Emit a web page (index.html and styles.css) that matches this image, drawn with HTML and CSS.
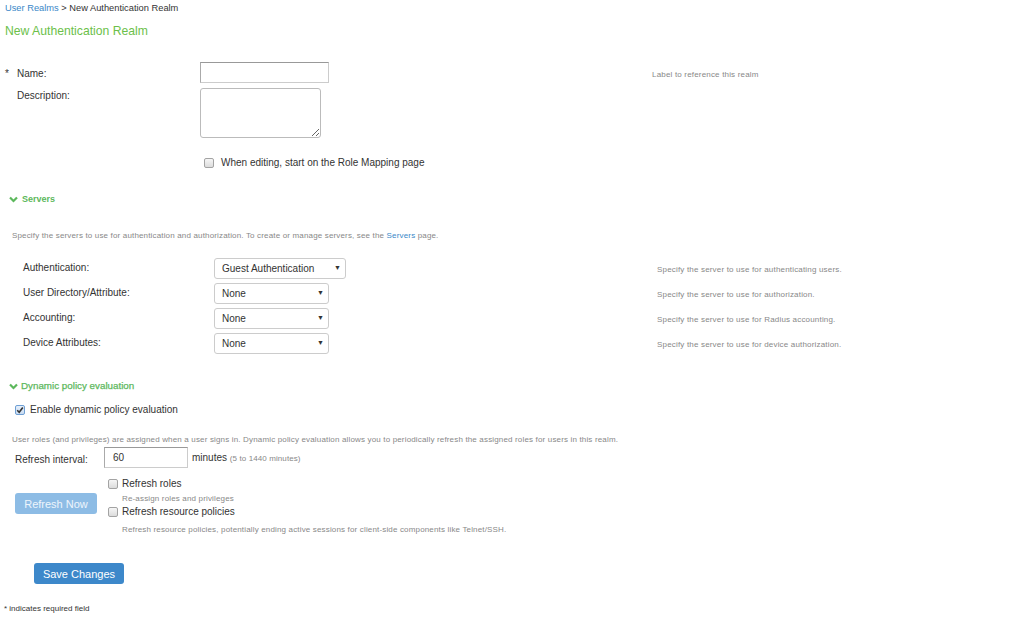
FILE: index.html
```html
<!DOCTYPE html>
<html lang="en">
<head>
	<meta charset="UTF-8">
	<title>New Authentication Realm</title>
	<link rel="stylesheet" href="styles.css">
</head>
<body>

	<div class="crumb"><a href="#">User Realms</a> &gt; New Authentication Realm</div>
	<h1 class="title">New Authentication Realm</h1>

	<div class="realm-grid">
		<div class="lbl mid"><span class="req">*</span>Name:</div>
		<div class="mid"><input type="text" class="txt name-input"></div>
		<div class="help mid">Label to reference this realm</div>

		<div class="lbl top"><span class="req"></span>Description:</div>
		<div><textarea class="desc"></textarea></div>
		<div></div>

		<div></div>
		<label class="check-row start-map"><span class="cb"></span>When editing, start on the Role Mapping page</label>
		<div></div>
	</div>

	<div class="section-head"><span class="chev"><svg width="9" height="7" viewBox="0 0 9 7"><path d="M1 1.5 L4.5 5 L8 1.5" fill="none" stroke="#5cb85c" stroke-width="2.2"/></svg></span>Servers</div>
	<p class="note servers-note">Specify the servers to use for authentication and authorization. To create or manage servers, see the <a href="#">Servers</a> page.</p>

	<div class="server-grid">
		<div class="lbl">Authentication:</div>
		<div><span class="sel wide">Guest Authentication</span></div>
		<div class="help">Specify the server to use for authenticating users.</div>

		<div class="lbl">User Directory/Attribute:</div>
		<div><span class="sel">None</span></div>
		<div class="help">Specify the server to use for authorization.</div>

		<div class="lbl">Accounting:</div>
		<div><span class="sel">None</span></div>
		<div class="help">Specify the server to use for Radius accounting.</div>

		<div class="lbl">Device Attributes:</div>
		<div><span class="sel">None</span></div>
		<div class="help">Specify the server to use for device authorization.</div>
	</div>

	<div class="section-head dyn"><span class="chev"><svg width="9" height="7" viewBox="0 0 9 7"><path d="M1 1.5 L4.5 5 L8 1.5" fill="none" stroke="#5cb85c" stroke-width="2.2"/></svg></span>Dynamic policy evaluation</div>
	<label class="check-row enable"><span class="cb on"><svg width="8" height="8" viewBox="0 0 8 8"><path d="M1.2 4.2 L3.2 6.2 L6.8 1.4" fill="none" stroke="#333" stroke-width="1.6"/></svg></span>Enable dynamic policy evaluation</label>

	<p class="note roles-note">User roles (and privileges) are assigned when a user signs in. Dynamic policy evaluation allows you to periodically refresh the assigned roles for users in this realm.</p>

	<div class="interval-row">
		<span class="lbl interval-lbl">Refresh interval:</span>
		<input type="text" class="txt interval-input" value="60">
		<span class="minutes">minutes <small>(5 to 1440 minutes)</small></span>
	</div>

	<div class="refresh-block">
		<div class="refresh-left"><button class="btn btn-light">Refresh Now</button></div>
		<div class="refresh-right">
			<label class="check-row"><span class="cb"></span>Refresh roles</label>
			<div class="note sub1">Re-assign roles and privileges</div>
			<label class="check-row rp"><span class="cb"></span>Refresh resource policies</label>
			<div class="note sub2">Refresh resource policies, potentially ending active sessions for client-side components like Telnet/SSH.</div>
		</div>
	</div>

	<div class="save-row"><button class="btn btn-primary">Save Changes</button></div>

	<div class="required-note">* indicates required field</div>

</body>
</html>
```

FILE: styles.css
```css
html, body {
	margin: 0;
	padding: 0;
	background: #fff;
	font-family: "Liberation Sans", Arial, sans-serif;
	font-size: 10px;
	color: #333;
}

a {
	color: #3a87c8;
	text-decoration: none;
}

.crumb {
	padding: 3px 5px 0;
	line-height: 11px;
	font-size: 9.3px;
}

.title {
	margin: 10px 0 0 5px;
	font-size: 12.2px;
	line-height: 15px;
	font-weight: normal;
	color: #6cbf4a;
}

/* realm name / description */
.realm-grid {
	display: grid;
	grid-template-columns: 195px 452px auto;
	row-gap: 5px;
	margin-top: 23px;
	padding-left: 5px;
}

.mid {
	display: flex;
	align-items: center;
}

.top {
	line-height: 14px;
	padding-top: 1px;
}

.req {
	display: inline-block;
	width: 12px;
}

.lbl {
	color: #333;
}

.realm-grid .lbl.mid {
	padding-top: 2px;
}

.txt {
	box-sizing: border-box;
	height: 21px;
	border: 1px solid #ccc;
	border-top-color: #999;
	border-left-color: #aaa;
	border-radius: 0;
	padding: 0 8px;
	font-family: inherit;
	font-size: 10px;
	color: #333;
	outline: none;
}

.name-input {
	width: 129px;
}

.desc {
	display: block;
	box-sizing: border-box;
	width: 121px;
	height: 50px;
	border: 1px solid #bbb;
	border-radius: 3px;
	margin: 0;
}

.help {
	font-size: 8px;
	letter-spacing: 0.18px;
	color: #888;
}

.realm-grid .help {
	padding-top: 3px;
}

.check-row {
	display: flex;
	align-items: center;
	line-height: 14px;
	color: #333;
}

.start-map {
	padding-left: 4px;
	margin-top: 13px;
}

.cb {
	box-sizing: border-box;
	display: inline-flex;
	align-items: center;
	justify-content: center;
	width: 10px;
	height: 10px;
	margin-right: 7px;
	border: 1px solid #a3a3a3;
	border-radius: 2px;
	background: linear-gradient(#f6f6f6, #dcdcdc);
}

.cb.on {
	border-color: #6e9fd4;
	background: linear-gradient(#e6f0fb, #c9dcf2);
	margin-right: 5px;
}

/* section headings */
.section-head {
	display: flex;
	align-items: center;
	margin: 23px 0 0 9px;
	line-height: 12px;
	font-size: 9px;
	font-weight: bold;
	color: #5cb85c;
}

.chev {
	display: inline-flex;
	width: 13px;
}

.note {
	margin: 0;
	font-size: 8px;
	line-height: 10px;
	letter-spacing: 0.16px;
	color: #888;
}

.servers-note {
	margin: 26px 0 0 12px;
}

.server-grid {
	display: grid;
	grid-template-columns: 191px 443px auto;
	row-gap: 4px;
	margin-top: 17px;
	padding-left: 23px;
}

.server-grid > div {
	display: flex;
	align-items: center;
}

.server-grid .lbl {
	align-items: flex-start;
	padding-top: 4px;
	height: 17px;
}

.server-grid .help {
	padding-top: 1px;
}

.sel {
	position: relative;
	box-sizing: border-box;
	display: flex;
	align-items: center;
	width: 115px;
	height: 21px;
	padding-left: 7px;
	border: 1px solid #ccc;
	border-radius: 3px;
	background: #fff;
	color: #333;
}

.sel.wide {
	width: 132px;
}

.sel::after {
	content: "\25BC";
	position: absolute;
	right: 4px;
	top: 5px;
	font-size: 7px;
	color: #333;
}

.dyn {
	margin-top: 26px;
	margin-left: 9px;
	font-size: 9.8px;
	font-weight: normal;
	-webkit-text-stroke: 0.25px #5cb85c;
}

.dyn .chev {
	width: 12px;
}

.enable {
	margin: 11px 0 0 15px;
}

.roles-note {
	margin: 18px 0 0 12px;
}

.interval-row {
	display: flex;
	align-items: center;
	margin: 2px 0 0 15px;
}

.interval-lbl {
	width: 89px;
	padding-top: 3px;
}

.interval-input {
	width: 84px;
}

.minutes {
	margin-left: 4px;
	margin-top: -1px;
}

.minutes small {
	font-size: 8px;
	letter-spacing: 0.1px;
	color: #888;
}

.refresh-block {
	display: flex;
	margin: 8px 0 0 15px;
}

.refresh-left {
	width: 93px;
}

.refresh-left .btn {
	margin-top: 17px;
}

.refresh-right .cb {
	margin-right: 4px;
}

.refresh-right .check-row {
	padding-top: 1px;
}

.sub1 {
	margin: 3px 0 0 14px;
}

.rp {
	margin-top: 0;
}

.sub2 {
	margin: 6px 0 0 14px;
}

.btn {
	box-sizing: border-box;
	height: 21px;
	border: none;
	border-radius: 3px;
	font-family: inherit;
	font-size: 11px;
	color: #fff;
	cursor: pointer;
}

.btn-light {
	width: 82px;
	background: #8dbce5;
	color: #eef5fc;
}

.btn-primary {
	width: 90px;
	background: #3d88ca;
}

.save-row {
	margin: 28px 0 0 34px;
}

.required-note {
	margin: 20px 0 0 4px;
	font-size: 8px;
	line-height: 10px;
	color: #333;
}
```
